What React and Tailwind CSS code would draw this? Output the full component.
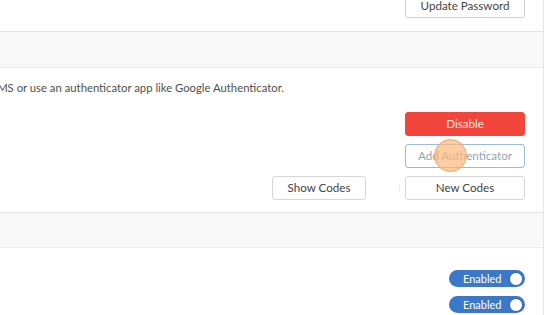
import React from 'react'

const font = { fontFamily: 'Lato, "Open Sans", sans-serif' }

function Btn({ children, className = '' }) {
  return (
    <button
      className={
        'flex h-[24px] items-center justify-center rounded-[3px] border text-[11.6px] leading-none ' + className
      }
    >
      {children}
    </button>
  )
}

function Toggle() {
  return (
    <div className="flex h-[17px] w-[76px] items-center justify-between rounded-full bg-[#3c78c8] pl-[14px] pr-[2px]">
      <span className="text-[11px] leading-none text-white">Enabled</span>
      <span className="h-[14px] w-[14px] rounded-full border border-[#2f62a8] bg-white" />
    </div>
  )
}

export default function App() {
  return (
    <div className="flex h-[315px] w-[560px] overflow-hidden bg-white text-[#555]" style={font}>
      <div className="w-[544px] shrink-0 overflow-hidden border-r border-[#e6e6e6]">
        {/* password card tail */}
        <div className="flex h-[32px] justify-end border-b border-[#e4e4e4] pr-[18px]">
          <Btn className="-mt-[6px] w-[120px] border-[#cfcfcf] bg-white text-[#444]">Update Password</Btn>
        </div>

        {/* two-factor card */}
        <div className="h-[36px] border-b border-[#ececec] bg-[#f8f8f8]" />
        <div className="flex flex-col border-b border-[#e4e4e4] pb-[12px] pr-[18px]">
          <p className="-ml-[9px] mt-[12px] whitespace-nowrap text-[11.3px] leading-[16px] text-[#4f4f4f]">
            SMS or use an authenticator app like Google Authenticator.
          </p>
          <div className="mt-[16px] flex flex-col items-end gap-[8px]">
            <Btn className="w-[120px] border-[#f2453c] bg-[#f2453c] text-[#ffe9e6]">Disable</Btn>
            <div className="relative">
              <Btn className="w-[120px] border-[#9bbbd2] bg-white text-[#93a4b3]">Add Authenticator</Btn>
              <span className="pointer-events-none absolute left-[29px] top-[-5px] h-[33px] w-[33px] rounded-full border border-[#f7a460] bg-[#fbb67c]/70" />
            </div>
            <div className="flex items-center">
              <Btn className="w-[94px] border-[#d6d6d6] bg-white text-[#444]">Show Codes</Btn>
              <span className="ml-[33px] mr-[5px] h-[8px] w-px bg-[#eeeeee]" />
              <Btn className="w-[120px] border-[#d6d6d6] bg-white text-[#444]">New Codes</Btn>
            </div>
          </div>
        </div>

        {/* notifications card */}
        <div className="h-[35px] border-b border-[#ececec] bg-[#f8f8f8]" />
        <div className="flex flex-col items-end gap-[9px] pr-[18px] pt-[22px]">
          <Toggle />
          <Toggle />
        </div>
      </div>
      <div className="flex-1 bg-white" />
    </div>
  )
}
